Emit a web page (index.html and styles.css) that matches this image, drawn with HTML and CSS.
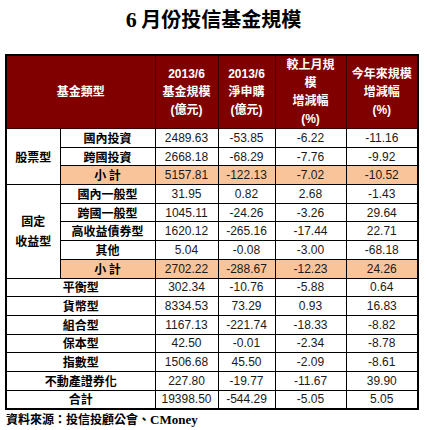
FILE: index.html
```html
<!DOCTYPE html>
<html lang="zh-Hant">
<head>
<meta charset="utf-8">
<link rel="stylesheet" href="styles.css">
</head>
<body>
<h1 class="title"><span class="num">6</span> 月份投信基金規模</h1>
<table class="fund">
  <colgroup>
    <col class="c1"><col class="c2"><col class="c3"><col class="c4"><col class="c5"><col class="c6">
  </colgroup>
  <thead>
    <tr class="head">
      <th colspan="2">基金類型</th>
      <th>2013/6<br>基金規模<br>(億元)</th>
      <th>2013/6<br>淨申購<br>(億元)</th>
      <th>較上月規<br>模<br>增減幅<br>(%)</th>
      <th>今年來規模<br>增減幅<br>(%)</th>
    </tr>
  </thead>
  <tbody>
    <tr><th rowspan="3" class="grp">股票型</th><th>國內投資</th><td>2489.63</td><td>-53.85</td><td>-6.22</td><td>-11.16</td></tr>
    <tr><th>跨國投資</th><td>2668.18</td><td>-68.29</td><td>-7.76</td><td>-9.92</td></tr>
    <tr class="sub"><th>小 計</th><td>5157.81</td><td>-122.13</td><td>-7.02</td><td>-10.52</td></tr>
    <tr><th rowspan="5" class="grp">固定<br>收益型</th><th>國內一般型</th><td>31.95</td><td>0.82</td><td>2.68</td><td>-1.43</td></tr>
    <tr><th>跨國一般型</th><td>1045.11</td><td>-24.26</td><td>-3.26</td><td>29.64</td></tr>
    <tr><th>高收益債券型</th><td>1620.12</td><td>-265.16</td><td>-17.44</td><td>22.71</td></tr>
    <tr><th>其他</th><td>5.04</td><td>-0.08</td><td>-3.00</td><td>-68.18</td></tr>
    <tr class="sub"><th>小 計</th><td>2702.22</td><td>-288.67</td><td>-12.23</td><td>24.26</td></tr>
    <tr><th colspan="2">平衡型</th><td>302.34</td><td>-10.76</td><td>-5.88</td><td>0.64</td></tr>
    <tr><th colspan="2">貨幣型</th><td>8334.53</td><td>73.29</td><td>0.93</td><td>16.83</td></tr>
    <tr><th colspan="2">組合型</th><td>1167.13</td><td>-221.74</td><td>-18.33</td><td>-8.82</td></tr>
    <tr><th colspan="2">保本型</th><td>42.50</td><td>-0.01</td><td>-2.34</td><td>-8.78</td></tr>
    <tr><th colspan="2">指數型</th><td>1506.68</td><td>45.50</td><td>-2.09</td><td>-8.61</td></tr>
    <tr><th colspan="2">不動產證券化</th><td>227.80</td><td>-19.77</td><td>-11.67</td><td>39.90</td></tr>
    <tr><th colspan="2">合計</th><td>19398.50</td><td>-544.29</td><td>-5.05</td><td>5.05</td></tr>
  </tbody>
</table>
<p class="source">資料來源：投信投顧公會、<span class="en">CMoney</span></p>
</body>
</html>
```
FILE: styles.css
```css
html, body {
  margin: 0;
  padding: 0;
  background: #fff;
}
body {
  font-family: "Noto Sans CJK TC", "Liberation Sans", sans-serif;
  color: #000;
}
.title {
  margin: 0;
  height: 54px;
  padding-top: 6px;
  box-sizing: border-box;
  text-align: center;
  font-size: 20px;
  line-height: 26px;
  font-weight: 700;
  font-family: "Noto Sans CJK TC", serif;
}
.title .num {
  font-family: "Liberation Serif", serif;
  font-size: 22px;
}
.fund {
  margin-left: 5px;
  border-collapse: collapse;
  table-layout: fixed;
  width: 412px;
  border: 2px solid #000;
}
.c1 { width: 54px; }
.c2 { width: 95px; }
.c3 { width: 63px; }
.c4 { width: 57px; }
.c5 { width: 71px; }
.c6 { width: 72px; }
.fund tbody tr {
  height: 18.7px;
}
.fund th, .fund td {
  border: 1px solid #000;
  padding: 0;
  text-align: center;
  vertical-align: middle;
  font-size: 12px;
  line-height: 14px;
  overflow: hidden;
}
.fund td {
  font-family: "Liberation Sans", Arial, sans-serif;
  color: #1a1a1a;
  font-weight: 400;
}
.fund tbody th {
  font-weight: 700;
  font-family: "Noto Sans CJK TC", sans-serif;
}
.fund .grp {
  line-height: 20px;
}
.head th {
  height: 70px;
  background: #800000;
  color: #fff;
  font-weight: 700;
  border: 1px solid #3a0000;
  line-height: 18px;
  font-family: "Liberation Sans", "Noto Sans CJK TC", sans-serif;
}
.sub th, .sub td {
  background: #f9c49a;
}
.source {
  margin: 1px 0 0 6px;
  font-size: 12px;
  line-height: 16px;
  font-weight: 700;
  font-family: "Noto Sans CJK TC", sans-serif;
}
.source .en {
  font-family: "Liberation Serif", serif;
  font-size: 13px;
}
```
